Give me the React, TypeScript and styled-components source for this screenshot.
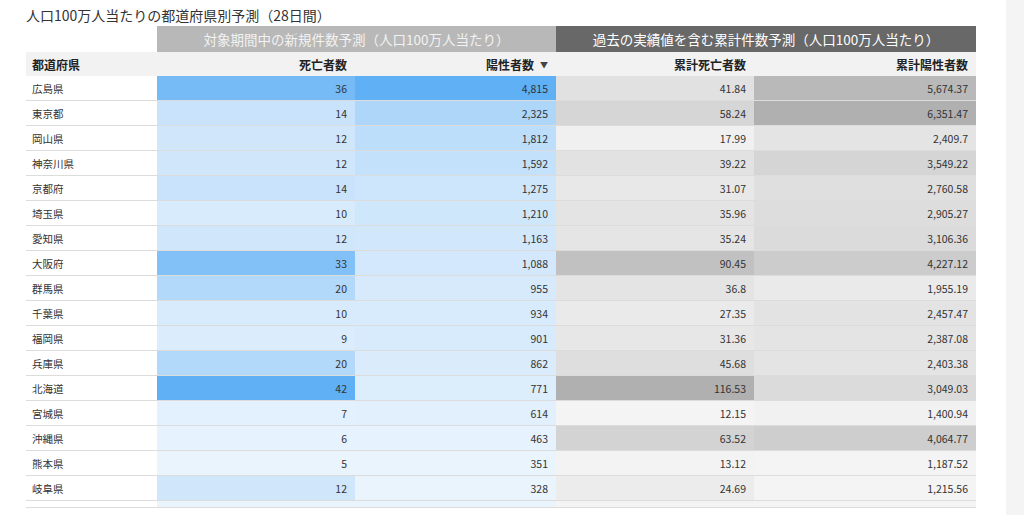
import React from "react";
import styled, { createGlobalStyle } from "styled-components";

const G = createGlobalStyle`
  body { margin: 0; background: #fff; font-family: "Noto Sans CJK JP", "Noto Sans", sans-serif; }
`;

const Page = styled.div`
  display: flex; width: 1024px; height: 515px; overflow: hidden;
`;
const Main = styled.div`
  flex: 1; padding: 6px 0 0 26px;
`;
const Side = styled.div`
  width: 18px; background: #f4f4f4;
`;
const Title = styled.div`
  font-size: 14px; color: #333; height: 20px; line-height: 18px;
`;
const Grid = styled.div`
  display: grid; grid-template-columns: 131px 198px 201px 198px 222px; width: 950px;
`;
const Blank = styled.div``;
const Group = styled.div<{ $dark?: boolean }>`
  grid-column: span 2; height: 26px; background: ${p => (p.$dark ? "#686868" : "#b8b8b8")};
  color: ${p => (p.$dark ? "#fff" : "#f2f2f2")}; font-size: 13.5px; display: flex; align-items: center; justify-content: center;
`;
const Head = styled.div<{ $left?: boolean }>`
  height: 24px; background: #f2f2f2; font-weight: bold; font-size: 12px; color: #222;
  display: flex; align-items: center; justify-content: ${p => (p.$left ? "flex-start" : "flex-end")};
  padding: 0 ${p => (p.$left ? "0 0 6px" : "8px 0 0")}; gap: 6px;
`;
const Cell = styled.div<{ $left?: boolean; $h?: number }>`
  height: ${p => p.$h ?? 24}px; border-bottom: 1px solid #dcdcdc; font-size: 10.5px; color: #333;
  display: flex; align-items: center; justify-content: ${p => (p.$left ? "flex-start" : "flex-end")};
  padding: ${p => (p.$left ? "0 0 0 6px" : "0 8px 0 0")}; background: #fff;
`;
const Caret = styled.span`font-size: 8px; color: #444;`;

const rows: [string, number, number, number, number][] = [
  ["広島県", 36, 4815, 41.84, 5674.37],
  ["東京都", 14, 2325, 58.24, 6351.47],
  ["岡山県", 12, 1812, 17.99, 2409.7],
  ["神奈川県", 12, 1592, 39.22, 3549.22],
  ["京都府", 14, 1275, 31.07, 2760.58],
  ["埼玉県", 10, 1210, 35.96, 2905.27],
  ["愛知県", 12, 1163, 35.24, 3106.36],
  ["大阪府", 33, 1088, 90.45, 4227.12],
  ["群馬県", 20, 955, 36.8, 1955.19],
  ["千葉県", 10, 934, 27.35, 2457.47],
  ["福岡県", 9, 901, 31.36, 2387.08],
  ["兵庫県", 20, 862, 45.68, 2403.38],
  ["北海道", 42, 771, 116.53, 3049.03],
  ["宮城県", 7, 614, 12.15, 1400.94],
  ["沖縄県", 6, 463, 63.52, 4064.77],
  ["熊本県", 5, 351, 13.12, 1187.52],
  ["岐阜県", 12, 328, 24.69, 1215.56],
];

const mix = (a: number[], b: number[], t: number) =>
  `rgb(${a.map((v, i) => Math.round(v + (b[i] - v) * t)).join(",")})`;
const BL = [234, 244, 253], BD = [96, 176, 245], GL = [244, 244, 244], GD = [176, 176, 176];
const rng = [0, 1, 2, 3, 4].map(i => {
  const vals = rows.map(r => r[i] as number);
  return [Math.min(...vals), Math.max(...vals)];
});
const t = (v: number, i: number) => (v - rng[i][0]) / (rng[i][1] - rng[i][0]);
const fmt = (v: number) => v.toLocaleString("en-US", { maximumFractionDigits: 2 });

export default function App() {
  return (
    <Page>
      <G />
      <Main>
        <Title>人口100万人当たりの都道府県別予測（28日間）</Title>
        <Grid>
          <Blank />
          <Group>対象期間中の新規件数予測（人口100万人当たり）</Group>
          <Group $dark>過去の実績値を含む累計件数予測（人口100万人当たり）</Group>
          <Head $left>都道府県</Head>
          <Head>死亡者数</Head>
          <Head>陽性者数<Caret>▼</Caret></Head>
          <Head>累計死亡者数</Head>
          <Head>累計陽性者数</Head>
          {rows.map(r => (
            <React.Fragment key={r[0]}>
              <Cell $left>{r[0]}</Cell>
              {[1, 2, 3, 4].map(i => (
                <Cell key={i} style={{ background: i < 3 ? mix(BL, BD, t(r[i] as number, i)) : mix(GL, GD, t(r[i] as number, i)) }}>
                  {fmt(r[i] as number)}
                </Cell>
              ))}
            </React.Fragment>
          ))}
          <Cell $left $h={6} />
          {[BL, BL, GL, GL].map((c, i) => (
            <Cell key={i} $h={6} style={{ background: mix(c, c, 0) }} />
          ))}
        </Grid>
      </Main>
      <Side />
    </Page>
  );
}
